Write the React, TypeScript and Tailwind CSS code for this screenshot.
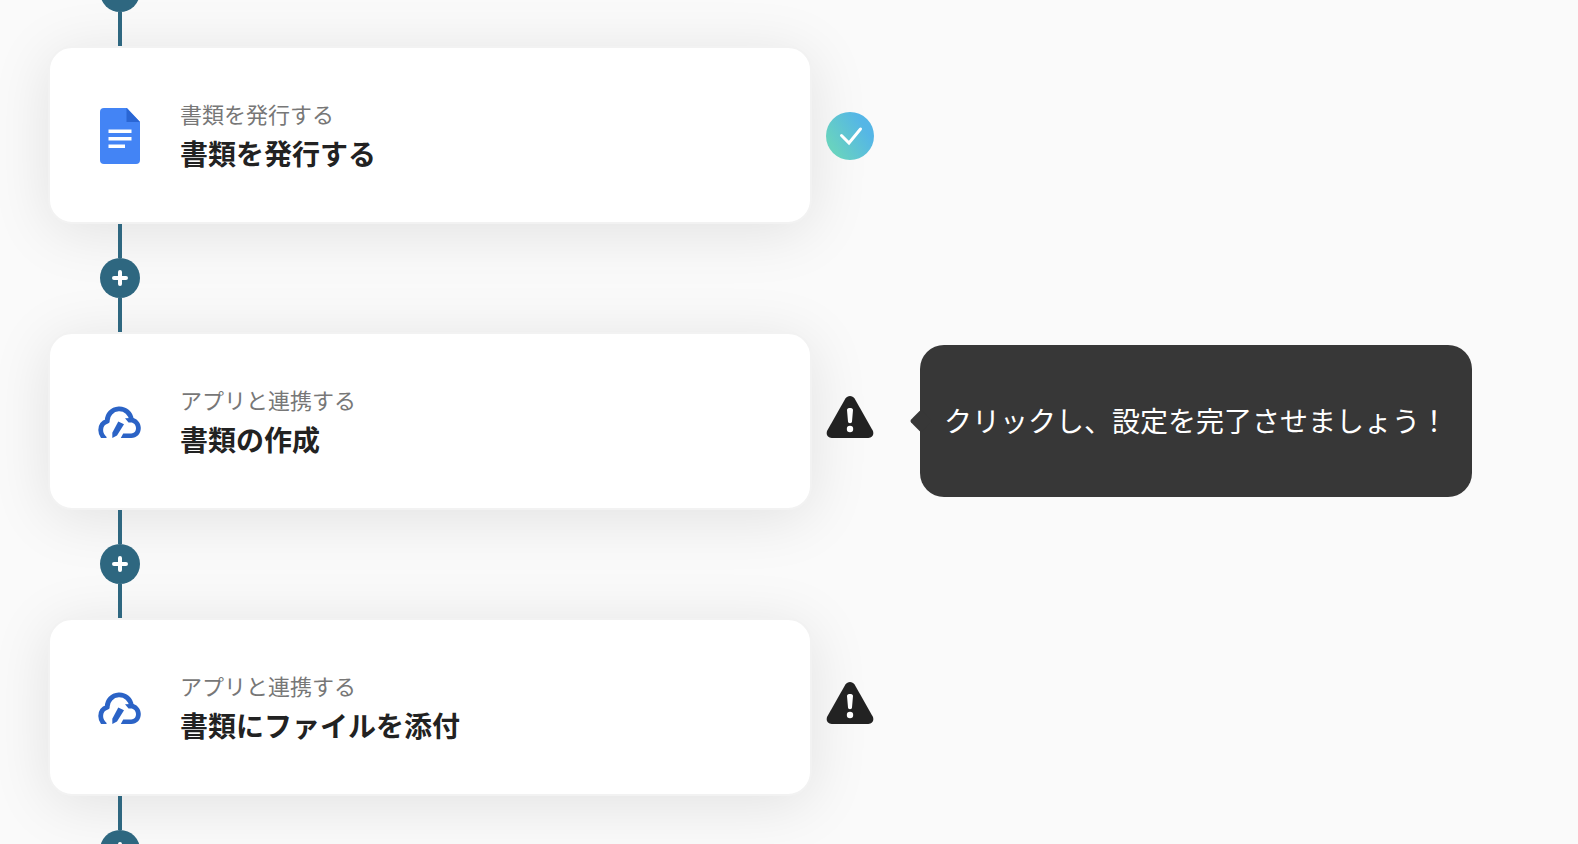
import { ReactNode } from "react";

type Status = "done" | "warning";

type Step = {
  category: string;
  title: string;
  icon: ReactNode;
  status: Status;
  hint?: string;
};

function DocIcon() {
  return (
    <svg className="h-14 w-10" viewBox="0 0 40 56" aria-hidden="true">
      <path d="M4 0H27L40 14V52a4 4 0 0 1-4 4H4a4 4 0 0 1-4-4V4a4 4 0 0 1 4-4Z" fill="#4384f5" />
      <path d="M26.500 0L40 14H26.500Z" fill="#2a66d4" />
      <path d="M8.500 21.500h23v3.500h-23zM8.500 29h23v3.500h-23zM8.500 36.500h16.500v3.500h-16.500z" fill="#fff" />
    </svg>
  );
}

function CloudIcon() {
  return (
    <svg className="h-8 w-11" viewBox="0 0 44 32" fill="none" aria-hidden="true">
      <path
        d="M7.300 33C4.300 30.500 2.700 27.500 2.700 24C2.700 19.500 5.400 16.300 9.300 15.200A12 11.700 0 0 1 33.300 14"
        stroke="#2b63c6"
        strokeWidth="4.800"
        strokeLinejoin="round"
      />
      <path
        d="M27 12.200L35.500 11.900C40 13.500 42.800 17.300 42.800 22C42.800 27.800 38.800 32 33.200 32H22.800L25.200 27.400H33.200C36.200 27.400 38 25.300 38 22.300C38 19 35.700 16.600 32.800 16.600H30.500Z"
        fill="#2b63c6"
      />
      <path d="M20.300 15.500L26 18.300L19 29.500L14.300 32V26.700Z" fill="#2b63c6" />
    </svg>
  );
}

function CheckIcon() {
  return (
    <svg className="h-12 w-12" viewBox="0 0 48 48" fill="none" role="img" aria-label="完了">
      <defs>
        <linearGradient id="check" x1="6" y1="34" x2="38" y2="14" gradientUnits="userSpaceOnUse">
          <stop stopColor="#68d2c0" />
          <stop offset="1" stopColor="#55b6e6" />
        </linearGradient>
      </defs>
      <circle cx="24" cy="24" r="24" fill="url(#check)" />
      <path d="M15.500 23.500L23 31L34.500 17" stroke="#fff" strokeWidth="3" strokeLinecap="round" />
    </svg>
  );
}

function WarningIcon() {
  return (
    <svg className="h-12 w-12" viewBox="0 0 48 48" role="img" aria-label="未設定">
      <path
        d="M19.400 5.500C21.500 2 26.500 2 28.600 5.500L46.700 37.500C48.500 41 46.300 45 42.300 45H5.700C1.700 45 -0.500 41 1.300 37.500Z"
        fill="#222"
      />
      <path d="M21 17C21 14.400 27 14.400 27 17L26 28.500C26 30.800 22 30.800 22 28.500Z" fill="#fff" />
      <circle cx="24" cy="36" r="3.200" fill="#fff" />
    </svg>
  );
}

const steps: Step[] = [
  { category: "書類を発行する", title: "書類を発行する", icon: <DocIcon />, status: "done" },
  {
    category: "アプリと連携する",
    title: "書類の作成",
    icon: <CloudIcon />,
    status: "warning",
    hint: "クリックし、設定を完了させましょう！",
  },
  { category: "アプリと連携する", title: "書類にファイルを添付", icon: <CloudIcon />, status: "warning" },
];

function Connector() {
  return (
    <div className="relative ml-[52px] flex w-10 flex-col items-center">
      <div className="h-[34px] w-1 bg-[#2e6780]" />
      <button
        type="button"
        aria-label="追加"
        className="flex h-10 w-10 items-center justify-center rounded-full bg-[#2e6780]"
      >
        <svg className="h-4 w-4" viewBox="0 0 16 16" stroke="#fff" strokeWidth="4" strokeLinecap="round" aria-hidden="true">
          <path d="M8 2V14M2 8H14" />
        </svg>
      </button>
      <div className="h-[34px] w-1 bg-[#2e6780]" />
    </div>
  );
}

function StepRow({ step }: { step: Step }) {
  return (
    <div className="flex items-center">
      <button
        type="button"
        className="flex h-[178px] w-[764px] items-center gap-9 rounded-3xl border-2 border-[#f2f2f2] bg-white px-[46px] text-left shadow-[0_8px_60px_rgba(0,0,0,0.1)]"
      >
        <span className="flex w-12 justify-center pt-0.5">{step.icon}</span>
        <span className="flex flex-col gap-0.5 pb-0.5">
          <span className="text-[22px] leading-9 text-[#777]">{step.category}</span>
          <span className="text-[28px] leading-10 font-bold text-[#222]">{step.title}</span>
        </span>
      </button>

      <div className="relative ml-[14px] shrink-0">
        {step.status === "done" ? (
          <div className="pt-0.5">
            <CheckIcon />
          </div>
        ) : (
          <div className="pb-2">
            <WarningIcon />
          </div>
        )}
      </div>

      {step.hint && (
        <div className="relative ml-[46px] flex h-[152px] shrink-0 items-center rounded-3xl bg-[#373737] px-6 pb-0.5">
          <div className="absolute top-1/2 -left-[7px] h-4 w-4 -translate-y-1/2 rotate-45 rounded-xs bg-[#373737]" />
          <p className="text-[28px] leading-10 whitespace-nowrap text-white">{step.hint}</p>
        </div>
      )}
    </div>
  );
}

export default function App() {
  return (
    <main className="h-screen overflow-hidden bg-[#fafafa] pl-12 font-['Noto_Sans_CJK_JP',sans-serif]">
      {/* the flow starts scrolled past its first connector */}
      <div className="-mt-[62px]">
        <Connector />
        {steps.map((step) => (
          <div key={step.title}>
            <StepRow step={step} />
            <Connector />
          </div>
        ))}
      </div>
    </main>
  );
}
